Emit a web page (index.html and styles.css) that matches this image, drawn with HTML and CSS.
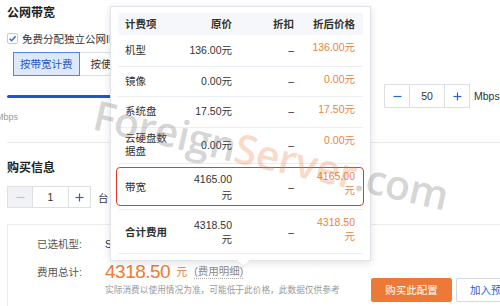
FILE: index.html
```html
<!DOCTYPE html>
<html lang="zh-CN">
<head>
    <meta charset="UTF-8">
    <meta name="viewport" content="width=device-width, initial-scale=1.0">
    <title>配置购买 - 费用明细</title>
    <link rel="stylesheet" href="styles.css">
</head>
<body>

    <div class="section">
        <h3 class="title">公网带宽</h3>
        <div class="check-row">
            <span class="checkbox">
                <svg width="11" height="11" viewBox="0 0 11 11"><rect x="0.5" y="0.5" width="10" height="10" rx="1.5" fill="#fff" stroke="#c6cad2"/><polyline points="2.6,5.6 4.6,7.8 8.6,3.2" fill="none" stroke="#2a62d6" stroke-width="1.4"/></svg>
            </span>
            免费分配独立公网IP
        </div>
        <div class="tabs">
            <span class="tab active">按带宽计费</span>
            <span class="tab">按使用流量计费</span>
        </div>
        <div class="bw-row">
            <div class="slider"><div class="slider-fill"></div></div>
            <div class="stepper">
                <span class="step"><svg width="9" height="9" viewBox="0 0 9 9"><line x1="0.5" y1="4.5" x2="8.5" y2="4.5" stroke="#2a62d6" stroke-width="1.2"/></svg></span>
                <span class="step-val">50</span>
                <span class="step"><svg width="9" height="9" viewBox="0 0 9 9"><line x1="0.5" y1="4.5" x2="8.5" y2="4.5" stroke="#2a62d6" stroke-width="1.2"/><line x1="4.5" y1="0.5" x2="4.5" y2="8.5" stroke="#2a62d6" stroke-width="1.2"/></svg></span>
            </div>
            <span class="unit">Mbps</span>
        </div>
        <div class="scale">Mbps</div>
    </div>

    <div class="divider"></div>

    <div class="section">
        <h3 class="title title-buy">购买信息</h3>
        <div class="qty-row">
            <div class="stepper stepper-small">
                <span class="step step-off"><svg width="9" height="9" viewBox="0 0 9 9"><line x1="0.5" y1="4.5" x2="8.5" y2="4.5" stroke="#c0c4cc" stroke-width="1.2"/></svg></span>
                <span class="step-val">1</span>
                <span class="step"><svg width="9" height="9" viewBox="0 0 9 9"><line x1="0.5" y1="4.5" x2="8.5" y2="4.5" stroke="#2a62d6" stroke-width="1.2"/><line x1="4.5" y1="0.5" x2="4.5" y2="8.5" stroke="#2a62d6" stroke-width="1.2"/></svg></span>
            </div>
            <span class="unit-qty">台</span>
        </div>
    </div>

    <div class="summary">
        <div class="info">
            <div class="info-row">
                <span class="label">已选机型:</span>
                <span>S5.LARGE8 (4核8GB)</span>
            </div>
            <div class="info-row total-row">
                <span class="label">费用总计:</span>
                <span class="price">4318.50</span>
                <span class="yuan">元</span>
                <span class="detail">(费用明细)</span>
            </div>
            <div class="note">实际消费以使用情况为准，可能低于此价格，此数据仅供参考</div>
        </div>
        <div class="actions">
            <span class="btn btn-buy">购买此配置</span>
            <span class="btn btn-add">加入预算清单</span>
        </div>
    </div>

    <!-- 费用明细弹层 -->
    <div class="popover">
        <table class="fee-table">
            <colgroup>
                <col class="w-name"><col class="w-price"><col class="w-disc"><col class="w-after">
            </colgroup>
            <thead>
                <tr><th class="c-name">计费项</th><th>原价</th><th>折扣</th><th class="c-after">折后价格</th></tr>
            </thead>
            <tbody>
                <tr class="row-a"><td class="c-name">机型</td><td>136.00元</td><td>–</td><td class="c-after">136.00元</td></tr>
                <tr class="row-b"><td class="c-name">镜像</td><td>0.00元</td><td>–</td><td class="c-after">0.00元</td></tr>
                <tr class="row-c"><td class="c-name">系统盘</td><td>17.50元</td><td>–</td><td class="c-after">17.50元</td></tr>
                <tr class="row-d"><td class="c-name">云硬盘数<br>据盘</td><td>0.00元</td><td>–</td><td class="c-after">0.00元</td></tr>
                <tr class="row-e"><td class="c-name">带宽</td><td class="two">4165.00<br>元</td><td>–</td><td class="c-after">4165.00<br>元</td></tr>
                <tr class="row-f"><td class="c-name bold">合计费用</td><td class="two">4318.50<br>元</td><td>–</td><td class="c-after">4318.50<br>元</td></tr>
            </tbody>
        </table>
        <div class="highlight"></div>
        <span class="arrow"></span>
    </div>

    <div class="watermark"><span class="wm-gray">Foreign</span><span class="wm-orange">Server</span><span class="wm-gray">.com</span></div>

</body>
</html>
```

FILE: styles.css
```css
body {
    margin: 0;
    width: 500px;
    height: 306px;
    overflow: hidden;
    position: relative;
    background: #fff;
    color: #333;
    font-family: "Liberation Sans", "Noto Sans CJK SC", sans-serif;
}

.section {
    padding-left: 7px;
}

.title {
    margin: 4px 0 0;
    font-size: 12px;
    line-height: 18px;
    font-weight: bold;
    color: #222;
}

.title-buy {
    margin-top: 16px;
}

.check-row {
    display: flex;
    align-items: center;
    margin-top: 8px;
    height: 16px;
    font-size: 10.5px;
    white-space: nowrap;
}

.checkbox {
    display: flex;
    width: 11px;
    height: 11px;
    margin-right: 4px;
}

.tabs {
    display: flex;
    margin: 6px 0 0 6px;
}

.tab {
    box-sizing: border-box;
    height: 24px;
    padding: 0 6px;
    border: 1px solid #dcdfe6;
    font-size: 10.5px;
    line-height: 22px;
    white-space: nowrap;
}

.tab.active {
    background: #dde8fb;
    border-color: #5285e8;
    color: #2556c4;
}

.tab + .tab {
    border-left: none;
    padding-left: 11px;
}

.bw-row {
    display: flex;
    align-items: center;
    margin-top: 8px;
    height: 24px;
}

.slider {
    width: 365px;
    margin-right: 12px;
    height: 3px;
    flex-shrink: 0;
}

.slider-fill {
    width: 355px;
    height: 3px;
    background: #2152d1;
    border-radius: 2px;
}

.stepper {
    display: flex;
    box-sizing: border-box;
    height: 24px;
    border: 1px solid #dcdfe6;
    flex-shrink: 0;
}

.step {
    width: 24px;
    display: flex;
    align-items: center;
    justify-content: center;
}

.step-val {
    width: 34px;
    border-left: 1px solid #dcdfe6;
    border-right: 1px solid #dcdfe6;
    font-size: 10.5px;
    line-height: 22px;
    text-align: center;
}

.stepper-small {
    height: 22px;
}

.stepper-small .step-val {
    width: 35px;
    line-height: 20px;
}

.stepper-small .step:last-child {
    width: 21px;
}

.step-off {
    background: #f0f2f5;
}

.unit {
    margin-left: 4px;
    font-size: 10.5px;
    white-space: nowrap;
}

.scale {
    margin: 3px 0 0 -11px;
    font-size: 9px;
    line-height: 12px;
    color: #999;
}

.divider {
    margin: 19px 0 0 7px;
    height: 1px;
    background: #e9e9e9;
}

.qty-row {
    display: flex;
    align-items: center;
    margin-top: 9px;
}

.unit-qty {
    margin-left: 7px;
    font-size: 10.5px;
}

.summary {
    display: flex;
    width: 620px;
    height: 90px;
    margin: 16px 0 0 7px;
    border-top: 1px solid #ececec;
    border-left: 1px solid #ececec;
}

.info {
    width: 363px;
    flex-shrink: 0;
    box-sizing: border-box;
    padding: 11px 0 0 29px;
}

.info-row {
    display: flex;
    align-items: center;
    font-size: 10.5px;
    line-height: 16px;
    white-space: nowrap;
}

.label {
    width: 68px;
    flex-shrink: 0;
    color: #555;
}

.total-row {
    margin-top: 8px;
    line-height: 24px;
}

.price {
    font-size: 19px;
    letter-spacing: -0.5px;
    color: #ee7a30;
}

.yuan {
    margin-left: 6px;
    font-size: 11px;
    color: #ee7a30;
}

.detail {
    margin-left: 7px;
    line-height: 13px;
    color: #888;
    border-bottom: 1px dotted #aaa;
}

.note {
    margin-left: 68px;
    font-size: 8.7px;
    line-height: 12px;
    color: #999;
    white-space: nowrap;
}

.actions {
    display: flex;
    padding-top: 53px;
}

.btn {
    box-sizing: border-box;
    height: 24px;
    font-size: 10.5px;
    line-height: 22px;
    border: 1px solid;
    border-radius: 2px;
    white-space: nowrap;
}

.btn-buy {
    width: 81px;
    background: #ec7a36;
    border-color: #ec7a36;
    color: #fff;
    text-align: center;
}

.btn-add {
    margin-left: 4px;
    padding: 0 13px;
    background: #fff;
    border-color: #d5d9e0;
    color: #2a5fc9;
}

/* 费用明细弹层 */
.popover {
    position: absolute;
    left: 110px;
    top: 6px;
    width: 261px;
    box-sizing: border-box;
    padding: 6px 7px;
    background: #fff;
    border: 1px solid #e1e4ea;
    box-shadow: 0 2px 8px rgba(0, 0, 0, 0.12);
    z-index: 5;
}

.fee-table {
    width: 245px;
    table-layout: fixed;
    border-collapse: separate;
    border-spacing: 0;
    font-size: 10.5px;
    color: #333;
}

.w-name { width: 62px; }
.w-price { width: 59px; }
.w-disc { width: 62px; }
.w-after { width: 62px; }

.fee-table th {
    padding: 4px 7px;
    line-height: 14px;
    background: #f5f7fa;
    font-weight: 600;
    text-align: right;
    white-space: nowrap;
}

.fee-table td {
    padding: 8px 7px;
    line-height: 15px;
    text-align: right;
    white-space: nowrap;
    border-bottom: 1px solid #ebeef5;
    vertical-align: middle;
}

.fee-table .c-name {
    text-align: left;
}

.fee-table .c-after {
    padding-right: 8px;
}

.fee-table td.c-after {
    vertical-align: top;
    line-height: 14px;
    color: #e8843f;
}

.row-b td { padding-top: 7px; padding-bottom: 7px; }
.row-c td { padding-top: 7px; padding-bottom: 8px; }
.row-d td { padding-top: 4px; padding-bottom: 5px; }
.row-d td.c-name { line-height: 13px; }
.row-e td { padding-top: 7px; padding-bottom: 6px; }
.row-e td.two { line-height: 16px; }
.row-f td { padding-top: 8px; padding-bottom: 7px; }
.row-f td.two { line-height: 14px; }

.fee-table td.c-after {
    padding-top: 5px;
}

.bold {
    font-weight: bold;
}

.highlight {
    position: absolute;
    left: 5px;
    top: 160px;
    width: 248px;
    height: 39px;
    box-sizing: border-box;
    border: 1.5px solid #e23b2c;
    border-radius: 4px;
}

.arrow {
    position: absolute;
    left: 128px;
    top: 250px;
    width: 8px;
    height: 8px;
    background: #fff;
    border-right: 1px solid #e1e4ea;
    border-bottom: 1px solid #e1e4ea;
    transform: rotate(45deg);
}

.watermark {
    position: absolute;
    left: 99px;
    top: 94px;
    font-family: "Open Sans", sans-serif;
    font-size: 41px;
    font-weight: 600;
    line-height: 1;
    letter-spacing: -0.5px;
    white-space: nowrap;
    transform: rotate(13deg);
    transform-origin: 0 0;
    pointer-events: none;
    z-index: 10;
}

.wm-gray {
    color: rgba(110, 110, 110, 0.3);
}

.wm-orange {
    color: rgba(240, 120, 60, 0.28);
}
```
